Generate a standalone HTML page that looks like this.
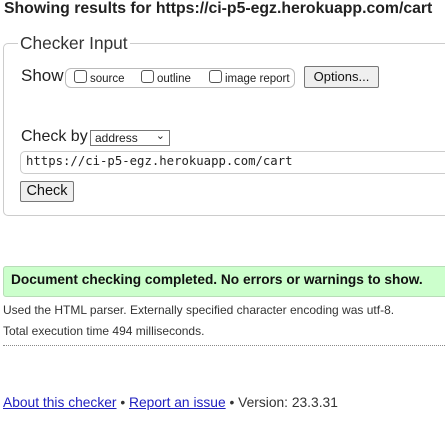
<!DOCTYPE html>
<html><head><style>
body{margin:0;width:445px;height:430px;overflow:hidden;font-family:"Liberation Sans",Arial,sans-serif;color:#222;background:#fff;position:relative}
.a{position:absolute;white-space:nowrap}
h1{position:absolute;left:4px;top:0;margin:0;font-size:15.8px;font-weight:bold;line-height:18px;color:#222}
.fs{position:absolute;left:3px;top:43px;width:450px;height:171px;border:1px solid #ccc;border-radius:5px}
.leg{left:18px;top:33px;background:#fff;padding:0 2px;font-size:17.3px;color:#333}
.pill{left:65px;top:68px;width:228px;height:18px;border:1px solid #bbb;border-radius:6px}
.cb{display:inline-block;width:11px;height:11px;border:1px solid #555;border-radius:3px;vertical-align:-1px;margin-right:3px}
.btn{border:1px solid #777;background:#efefef;border-radius:2px;text-align:center;color:#111}
.small{font-size:11.5px}
</style></head><body>
<h1>Showing results for https://ci-p5-egz.herokuapp.com/cart</h1>
<div class="fs"></div>
<div class="a leg">Checker Input</div>
<div class="a" style="left:21px;top:66px;font-size:17px">Show</div>
<div class="a pill"></div>
<div class="a small" style="left:74px;top:70px"><span class="cb"></span>source</div>
<div class="a small" style="left:141px;top:70px"><span class="cb"></span>outline</div>
<div class="a small" style="left:209px;top:70px"><span class="cb"></span>image report</div>
<div class="a btn" style="left:304px;top:66px;width:73px;height:20px;line-height:20px;font-size:13px">Options...</div>
<div class="a" style="left:21px;top:128px;font-size:16px">Check by</div>
<div class="a" style="left:90px;top:130px;height:16px;border:1px solid #777;font-size:12px;line-height:15px;padding-left:4px;box-sizing:border-box;width:80px">address<span style="position:absolute;right:4px;top:-2px;font-size:11px">&#8964;</span></div>
<div class="a" style="left:20px;top:151px;width:440px;height:21px;border:1px solid #ccc;border-radius:5px"></div>
<div class="a" style="left:26px;top:154px;font-family:'DejaVu Sans Mono','Liberation Mono',monospace;font-size:12.3px;color:#222">https://ci-p5-egz.herokuapp.com/cart</div>
<div class="a btn" style="left:20px;top:181px;width:52px;height:19px;line-height:19px;font-size:14.5px">Check</div>
<div class="a" style="left:3px;top:266px;width:450px;height:29px;background:#ccffcc;border:1px solid #b8ddb8;border-radius:3px"></div>
<div class="a" style="left:11px;top:272px;font-size:13.7px;font-weight:bold;color:#111">Document checking completed. No errors or warnings to show.</div>
<div class="a" style="left:3px;top:303px;font-size:12px;color:#333">Used the HTML parser. Externally specified character encoding was utf-8.</div>
<div class="a" style="left:3px;top:324px;font-size:12px;color:#333">Total execution time 494 milliseconds.</div>
<div class="a" style="left:3px;top:345px;width:442px;border-top:1px dotted #888"></div>
<div class="a" style="left:3px;top:395px;font-size:13.8px;color:#333"><span style="color:#2020c0;text-decoration:underline">About this checker</span> • <span style="color:#2020c0;text-decoration:underline">Report an issue</span> • Version: 23.3.31</div>
</body></html>
